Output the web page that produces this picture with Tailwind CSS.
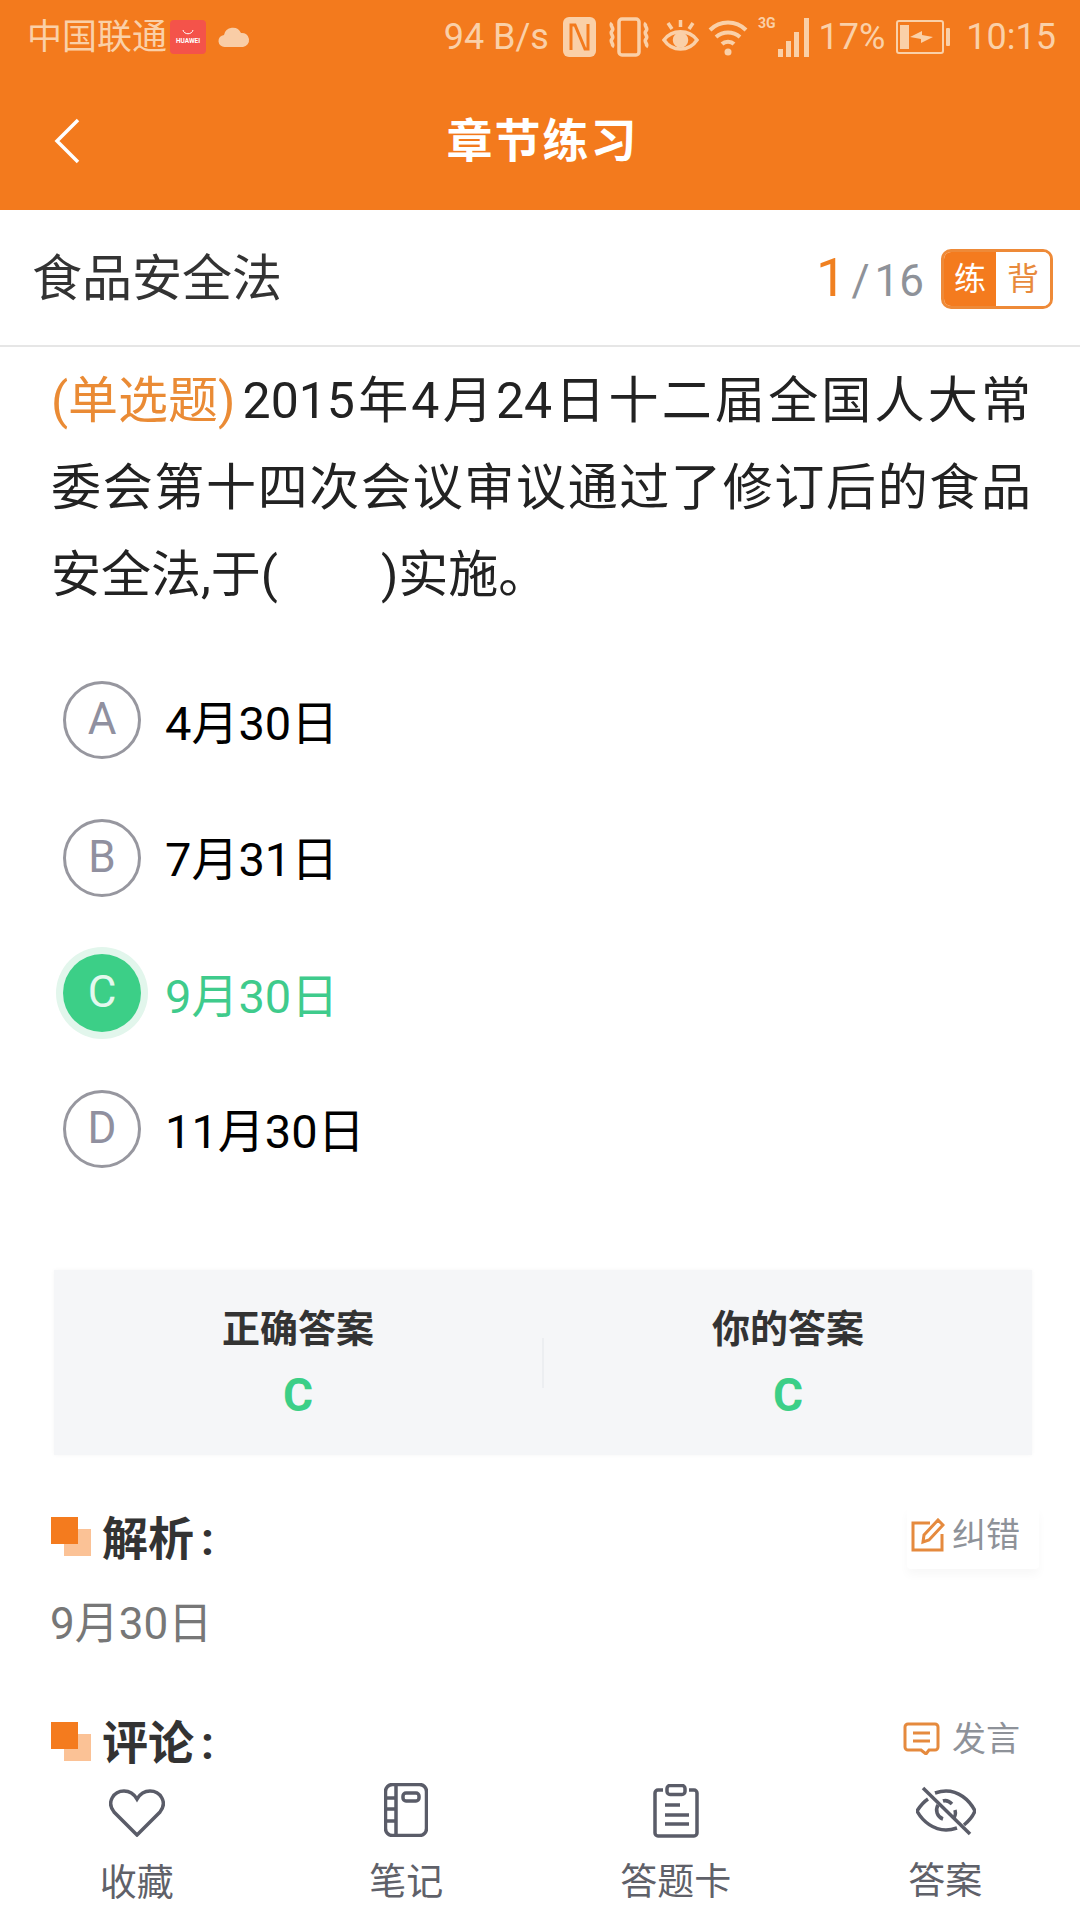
<!DOCTYPE html>
<html lang="zh-CN">
  <head>
    <meta charset="UTF-8" />
    <meta name="viewport" content="width=device-width, initial-scale=1.0" />
    <title>章节练习</title>
    <script src="https://cdn.jsdelivr.net/npm/@tailwindcss/browser@4"></script>
  </head>
  <body class="bg-white font-['Roboto','Noto_Sans_CJK_SC',sans-serif]">
    <div class="w-[1080px] h-[1920px] overflow-hidden flex flex-col bg-white">
      <!-- Status bar + title -->
      <header class="bg-[#f37a1d] h-[210px] shrink-0">
        <div class="h-[74px] flex items-center pl-[27px] pr-[24px] text-[#fad0a8] text-[36px]">
          <span class="leading-none text-[35px]">中国联通</span>
          <div class="ml-[3px] w-[36px] h-[34px] rounded-[4px] bg-[#f4534a] flex flex-col items-center justify-center text-white text-[6.5px] leading-none font-bold">
            <svg class="w-[14px] h-[7px] mb-[2px]" viewBox="0 0 14 7" fill="none" stroke="#fff" stroke-width="1"><path d="M2 1c1 5 9 5 10 0" /></svg>
            HUAWEI
          </div>
          <svg class="ml-[12px] w-[32px] h-[22px]" viewBox="0 0 32 22" fill="#f9cda6"><path d="M7 21a6 6 0 0 1-1-12 9 9 0 0 1 17-2 7 7 0 0 1 2 14z" /></svg>
          <span class="ml-auto leading-none">94 B/s</span>
          <!-- nfc -->
          <svg class="ml-[14px] w-[33px] h-[40px]" viewBox="0 0 33 40"><rect width="33" height="40" rx="6" fill="#fad0a8" /><path d="M8 33V8h4l10 24h3V7" fill="none" stroke="#f37a1d" stroke-width="3" /></svg>
          <!-- vibrate -->
          <svg class="ml-[12px] w-[42px] h-[40px]" viewBox="0 0 42 40" fill="none" stroke="#fad0a8" stroke-width="3.500"><rect x="11" y="2" width="20" height="36" rx="3" /><path d="M4 6c-3 3 3 5 0 8s3 5 0 8 3 5 0 8M38 6c-3 3 3 5 0 8s3 5 0 8 3 5 0 8" /></svg>
          <!-- eye comfort -->
          <svg class="ml-[12px] w-[37px] h-[36px]" viewBox="0 0 37 36" fill="none" stroke="#fad0a8" stroke-width="3.500"><path d="M2 21c8-11 25-11 33 0-8 12-25 12-33 0z" /><circle cx="18.500" cy="21" r="6" fill="#fad0a8" /><path d="M18.500 1v7M6 4l4 6M31 4l-4 6" /></svg>
          <!-- wifi -->
          <svg class="ml-[9px] w-[40px] h-[38px]" viewBox="0 0 40 38" fill="none" stroke="#fad0a8" stroke-width="4"><path d="M2 12c10-10 26-10 36 0M8 19c7-6 17-6 24 0M14 26c3-3 9-3 12 0" /><circle cx="20" cy="34" r="3.500" fill="#fad0a8" stroke="none" /></svg>
          <!-- 3g + signal -->
          <span class="ml-[10px] self-start mt-[16px] text-[14px] font-bold leading-none">3G</span>
          <svg class="w-[36px] h-[42px]" viewBox="0 0 36 42" fill="#fad0a8"><rect x="2" y="33" width="5" height="8" /><rect x="10" y="25" width="5" height="16" /><rect x="18" y="16" width="5" height="25" /><rect x="28" y="2" width="5" height="39" /></svg>
          <span class="ml-[7px] leading-none">17%</span>
          <!-- battery -->
          <svg class="ml-[11px] w-[54px] h-[36px]" viewBox="0 0 54 36" fill="none"><rect x="1" y="2" width="46" height="32" rx="2" stroke="#fad0a8" stroke-width="2" /><rect x="4" y="6" width="9" height="24" fill="#fad0a8" /><path d="M14 18l12-6v4l11 2-12 6v-4z" fill="#fad0a8" /><rect x="50" y="9" width="4" height="18" rx="1" fill="#fad0a8" /></svg>
          <span class="ml-[16px] leading-none">10:15</span>
        </div>
        <div class="h-[136px] relative flex items-center justify-center pl-[5px] pb-[2px]">
          <svg class="absolute left-[52px] top-[43px] w-[30px] h-[48px]" viewBox="0 0 30 48" fill="none" stroke="#fff" stroke-width="3.500"><path d="M26 3L5 24l21 21" /></svg>
          <h1 class="text-white text-[46px] font-bold leading-none tracking-[2px]">章节练习</h1>
        </div>
      </header>

      <!-- Chapter name -->
      <div class="h-[137px] shrink-0 border-b-2 border-[#e6e6e6] flex items-center pl-[32px] pr-[27px]">
        <span class="text-[50px] leading-none text-[#333] pt-[3px]">食品安全法</span>
        <div class="ml-auto flex items-baseline text-[#8e9299] text-[44px] leading-none">
          <span class="text-[#f08020] text-[54px] mr-[5px]">1</span>
          <span>/</span>
          <span class="ml-[5px]">16</span>
        </div>
        <div class="ml-[17px] mt-[2px] w-[112px] h-[60px] rounded-[10px] border-[3px] border-[#ee8a38] flex overflow-hidden text-[32px]">
          <span class="w-[52px] bg-[#f47b1e] text-white flex items-center justify-center">练</span>
          <span class="flex-1 bg-white text-[#e88a3c] flex items-center justify-center">背</span>
        </div>
      </div>

      <main class="flex-1 overflow-hidden">
        <!-- Question -->
        <div class="pt-[11px] pl-[51px] pr-[49px] text-[50px] leading-[87px] text-[#222]">
          <p class="text-justify [text-align-last:justify]"><span class="inline-block mr-[7px] text-[#ea8b35]">(单选题)</span>2015年4月24日十二届全国人大常</p>
          <p class="text-justify [text-align-last:justify]">委会第十四次会议审议通过了修订后的食品</p>
          <p>安全法,于(<span class="inline-block w-[103px]"></span>)实施。</p>
        </div>

        <!-- Options -->
        <ul class="mt-[33px] pl-[63px]">
          <li class="h-[136px] flex items-center gap-[24px]">
            <span class="w-[78px] h-[78px] rounded-full border-[3px] border-[#97979f] flex items-center justify-center pb-[3px] text-[44px] text-[#90909f]">A</span>
            <span class="text-[47px] text-black pt-[8px]">4月30日</span>
          </li>
          <li class="mt-[2px] h-[136px] flex items-center gap-[24px]">
            <span class="w-[78px] h-[78px] rounded-full border-[3px] border-[#97979f] flex items-center justify-center pb-[3px] text-[44px] text-[#90909f]">B</span>
            <span class="text-[47px] text-black pt-[4px]">7月31日</span>
          </li>
          <li class="-mt-[1px] h-[136px] flex items-center gap-[24px]">
            <span class="w-[78px] h-[78px] rounded-full bg-[#3ccf87] ring-[7px] ring-[#e2f6ec] flex items-center justify-center pb-[3px] text-[44px] text-[#e4f8ee]">C</span>
            <span class="text-[47px] text-[#3fcb8c] pt-[8px]">9月30日</span>
          </li>
          <li class="h-[136px] flex items-center gap-[24px]">
            <span class="w-[78px] h-[78px] rounded-full border-[3px] border-[#97979f] flex items-center justify-center pb-[3px] text-[44px] text-[#90909f]">D</span>
            <span class="text-[47px] text-black pt-[6px]">11月30日</span>
          </li>
        </ul>

        <!-- Answer card -->
        <div class="mt-[73px] ml-[54px] w-[978px] h-[185px] bg-[#f5f6f8] shadow-[0_0_4px_rgba(0,0,0,0.04)] flex items-center pt-[1px]">
          <div class="flex-1 flex flex-col items-center">
            <span class="text-[38px] leading-[50px] font-bold text-[#333]">正确答案</span>
            <span class="mt-[14px] text-[46px] leading-[54px] font-bold text-[#3ccf87]">C</span>
          </div>
          <div class="w-[2px] h-[50px] bg-[#eceef1]"></div>
          <div class="flex-1 flex flex-col items-center">
            <span class="text-[38px] leading-[50px] font-bold text-[#333]">你的答案</span>
            <span class="mt-[14px] text-[46px] leading-[54px] font-bold text-[#3ccf87]">C</span>
          </div>
        </div>

        <!-- Analysis -->
        <div class="mt-[53px] h-[60px] pl-[51px] pr-[50px] flex items-center">
          <div class="relative w-[40px] h-[39px] mb-[3px]">
            <div class="absolute right-0 bottom-0 w-[27px] h-[27px] bg-[#fbc296]"></div>
            <div class="absolute left-0 top-0 w-[27px] h-[27px] bg-[#f47b1e]"></div>
          </div>
          <h2 class="ml-[11px] pt-[2px] text-[46px] leading-none font-bold text-[#333]">解析<span class="ml-[7px]">:</span></h2>
          <div class="ml-auto w-[132px] h-[62px] -mr-[9px] pl-[4px] pb-[6px] flex items-center rounded-[4px] shadow-[0_6px_10px_rgba(0,0,0,0.03)]">
            <svg class="w-[34px] h-[35px]" viewBox="0 0 34 35" fill="none" stroke="#e58a3e" stroke-width="3"><path d="M19 5H2v27h29V16" /><path d="M12 24l1-7L27 2l5 5-14 15z" /></svg>
            <span class="ml-[7px] text-[34px] leading-none text-[#8e9299]">纠错</span>
          </div>
        </div>
        <p class="mt-[26px] pl-[50px] text-[44px] leading-[60px] text-[#777]">9月30日</p>

        <!-- Comments -->
        <div class="mt-[57px] h-[60px] pl-[51px] pr-[60px] flex items-center">
          <div class="relative w-[40px] h-[39px]">
            <div class="absolute right-0 bottom-0 w-[27px] h-[27px] bg-[#fbc296]"></div>
            <div class="absolute left-0 top-0 w-[27px] h-[27px] bg-[#f47b1e]"></div>
          </div>
          <h2 class="ml-[11px] pt-[4px] text-[46px] leading-none font-bold text-[#333]">评论<span class="ml-[7px]">:</span></h2>
          <svg class="ml-auto w-[37px] h-[33px] -mt-[6px]" viewBox="0 0 37 33" fill="none" stroke="#e58a3e" stroke-width="3"><path d="M5 2h27a3 3 0 0 1 3 3v20a3 3 0 0 1-3 3h-6l-3 4-5-4H5a3 3 0 0 1-3-3V5a3 3 0 0 1 3-3z" /><path d="M10 11h17M10 19h17" /></svg>
          <span class="ml-[12px] -mt-[5px] text-[34px] leading-none text-[#8e9299]">发言</span>
        </div>
      </main>

      <!-- Bottom bar -->
      <nav class="h-[150px] shrink-0 bg-white grid grid-cols-4 pl-[2px] text-[37px] leading-none text-[#5f6169]">
        <div class="flex flex-col items-center">
          <svg class="mt-[19px] w-[56px] h-[48px]" viewBox="0 0 56 48" fill="none" stroke="#5a5c68" stroke-width="3.500"><path d="M28 46L5 23C-3 13 5 2 15 2c6 0 10 3 13 8 3-5 7-8 13-8 10 0 18 11 10 21z" /></svg>
          <span class="mt-[28px]">收藏</span>
        </div>
        <div class="flex flex-col items-center">
          <svg class="mt-[13px] w-[44px] h-[54px]" viewBox="0 0 44 54" fill="none" stroke="#5a5c68" stroke-width="3.500"><rect x="1.500" y="1.500" width="41" height="51" rx="7" /><path d="M12 2v50M2 15h10M2 26h10M2 38h10" /><rect x="19" y="10" width="16" height="8" rx="3" /></svg>
          <span class="mt-[27px]">笔记</span>
        </div>
        <div class="flex flex-col items-center">
          <svg class="mt-[14px] w-[46px] h-[54px]" viewBox="0 0 46 54" fill="none" stroke="#5a5c68" stroke-width="3.500"><path d="M10 6H5a3 3 0 0 0-3 3v40a3 3 0 0 0 3 3h36a3 3 0 0 0 3-3V9a3 3 0 0 0-3-3h-5" /><rect x="14" y="1.500" width="18" height="9" rx="3" /><path d="M12 21h15M12 31h24M12 40h24" /></svg>
          <span class="mt-[26px]">答题卡</span>
        </div>
        <div class="flex flex-col items-center">
          <svg class="ml-[1px] mt-[16px] w-[60px] h-[50px]" viewBox="0 0 60 50" fill="none" stroke="#5a5c68" stroke-width="3.500"><path d="M12 13C6 17 3 22 1 25c6 11 17 19 29 19 4 0 8-1 11-2M19 7c3-1 7-2 11-2 12 0 23 8 29 20-2 5-6 10-11 14" /><path d="M22 19c-3 5-1 12 5 14M36 18c-3-3-6-4-9-3M39 24c1 4 0 7-2 9" /><path d="M7 2l47 46" /></svg>
          <span class="mt-[27px]">答案</span>
        </div>
      </nav>
    </div>
  </body>
</html>
